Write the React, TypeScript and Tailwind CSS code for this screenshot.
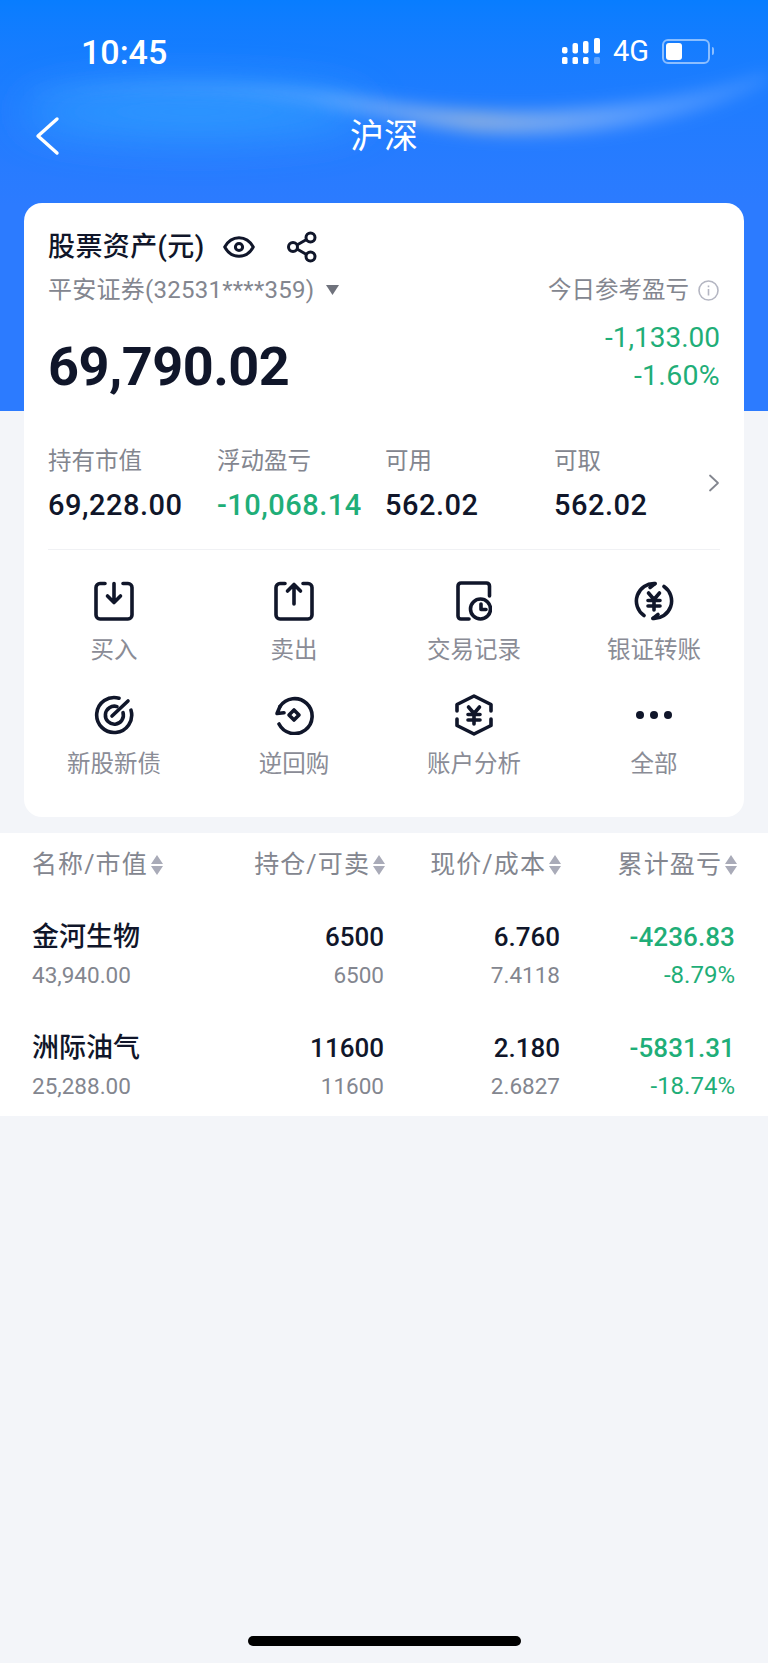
import React from "react";

const CJK = "font-['Roboto','Noto_Sans_CJK_SC',sans-serif]";
const INK = "#10162a";

function Stroke({ w = 40, h = 40, sw = 3.6, children }: { w?: number; h?: number; sw?: number; children: React.ReactNode }) {
  return (
    <svg width={w} height={h} viewBox={`0 0 ${w} ${h}`} fill="none" stroke={INK} strokeWidth={sw} strokeLinecap="round" strokeLinejoin="round">
      {children}
    </svg>
  );
}

const tray = "M11 2.5H6a4 4 0 0 0-4 4V34a4 4 0 0 0 4 4h28a4 4 0 0 0 4-4V6.5a4 4 0 0 0-4-4h-5";
const yen = "M14.5 12l5.5 6.5 5.5-6.5M14 19.5h12M14 25h12M20 19v10";

const icons: Record<string, React.ReactNode> = {
  buy: <Stroke><path d={tray} /><path d="M20 2.5V21M13.5 15l6.5 6.5 6.5-6.5" /></Stroke>,
  sell: <Stroke><path d={tray} /><path d="M20 23V3.5M13.5 10L20 3.5 26.5 10" /></Stroke>,
  record: (
    <Stroke w={36}>
      <path d="M33.5 15V5a3 3 0 0 0-3-3H5a3 3 0 0 0-3 3v30a3 3 0 0 0 3 3h8" />
      <circle cx="24.5" cy="28" r="10" />
      <path d="M25 23v5.5h5" />
    </Stroke>
  ),
  transfer: (
    <Stroke>
      <path d="M21 2.6A17.5 17.5 0 0 0 10 34.5" />
      <path d="M19 37.4A17.5 17.5 0 0 0 30 5.5" />
      <path d="M16 6.5L21 2.6M24 33.5L19 37.4" />
      <path d={yen} />
    </Stroke>
  ),
  ipo: (
    <Stroke>
      <path d="M25 3.2a17.5 17.5 0 1 0 12 12" />
      <path d="M23 11.6a9 9 0 1 0 6 6" />
      <path d="M18 21L34 6" />
    </Stroke>
  ),
  repo: (
    <Stroke>
      <path d="M6 11.5A17.5 17.5 0 1 1 5 29" />
      <path d="M6 11.5L3 18.5l7-.8" />
      <path d="M20 15l5 5-5 5-5-5z" />
    </Stroke>
  ),
  analysis: (
    <Stroke h={42} w={38}>
      <path d="M2 17v-6.5L19 2l17 8.5V17" />
      <path d="M2 25v6.5L19 40l17-8.5V25" />
      <path d="M13.5 13l5.5 6.5 5.5-6.5M13 20.5h12M13 26h12M19 20v10" />
    </Stroke>
  ),
  all: (
    <svg width="40" height="40" viewBox="0 0 40 40" fill={INK}>
      <circle cx="6" cy="20" r="4" />
      <circle cx="20" cy="20" r="4" />
      <circle cx="34" cy="20" r="4" />
    </svg>
  ),
};

const actions = [
  ["buy", "买入"],
  ["sell", "卖出"],
  ["record", "交易记录"],
  ["transfer", "银证转账"],
  ["ipo", "新股新债"],
  ["repo", "逆回购"],
  ["analysis", "账户分析"],
  ["all", "全部"],
];

const metrics = [
  ["持有市值", "69,228.00", "text-[#10162a]"],
  ["浮动盈亏", "-10,068.14", "text-[#1fae78]"],
  ["可用", "562.02", "text-[#10162a]"],
  ["可取", "562.02", "text-[#10162a]"],
];

const rows = [
  ["金河生物", "43,940.00", "6500", "6500", "6.760", "7.4118", "-4236.83", "-8.79%"],
  ["洲际油气", "25,288.00", "11600", "11600", "2.180", "2.6827", "-5831.31", "-18.74%"],
];

function Sort() {
  return (
    <svg width="12" height="20" viewBox="0 0 12 20" fill="#a9abb8" className="ml-[3px] shrink-0">
      <path d="M6 0l6 9H0zM6 20l-6-9h12z" />
    </svg>
  );
}

function Head({ children }: { children: string }) {
  return (
    <div className="flex items-center justify-end">
      <span>{children}</span>
      <Sort />
    </div>
  );
}

function StatusBar() {
  return (
    <div className="flex h-[64px] items-end justify-between pl-[81px] pr-[54px] text-white">
      <span className="text-[34px] leading-[40px] font-medium mb-[-8px]">10:45</span>
      <div className="flex items-center gap-[13px] h-[26px]">
        <svg width="38" height="26" viewBox="0 0 38 26" fill="#fff">
          <rect x="0" y="9" width="5.5" height="6.5" rx="2" />
          <rect x="10.5" y="5" width="5.5" height="10.5" rx="2" />
          <rect x="21" y="3" width="5.5" height="12.5" rx="2" />
          <rect x="32" y="0" width="6" height="15.5" rx="2" />
          <rect x="0" y="19" width="5.5" height="7" rx="1.5" />
          <rect x="10.5" y="19" width="5.5" height="7" rx="1.5" />
          <rect x="21" y="19" width="5.5" height="7" rx="1.5" />
          <rect x="32" y="19" width="6" height="7" rx="1.5" opacity="0.3" />
        </svg>
        <span className="text-[29px] leading-[26px]">4G</span>
        <div className="flex items-center gap-[2px]">
          <div className="w-[48px] h-[25px] rounded-[6px] border-2 border-white/50 p-[2px] flex">
            <div className="w-[16px] rounded-[3px] bg-white" />
          </div>
          <div className="w-[2px] h-[8px] rounded-r-full bg-white/50" />
        </div>
      </div>
    </div>
  );
}

function Wave() {
  return (
    <svg className="absolute inset-0 pointer-events-none" width="768" height="411" viewBox="0 0 768 411" fill="none">
      <defs>
        <filter id="b1" x="-10%" y="-100%" width="120%" height="300%"><feGaussianBlur stdDeviation="8" /></filter>
        <filter id="b2" x="-30%" y="-150%" width="160%" height="400%"><feGaussianBlur stdDeviation="22" /></filter>
        <linearGradient id="band" x1="0" y1="0" x2="768" y2="0" gradientUnits="userSpaceOnUse">
          <stop offset="0" stopColor="#ffffff" stopOpacity="0" />
          <stop offset="0.15" stopColor="#ffffff" stopOpacity="0.1" />
          <stop offset="0.4" stopColor="#ffffff" stopOpacity="0.2" />
          <stop offset="0.62" stopColor="#e8dcc8" stopOpacity="0.5" />
          <stop offset="0.85" stopColor="#ffffff" stopOpacity="0.22" />
          <stop offset="1" stopColor="#ffffff" stopOpacity="0.12" />
        </linearGradient>
      </defs>
      <ellipse cx="195" cy="112" rx="175" ry="26" fill="#36a6ff" opacity="0.7" filter="url(#b2)" />
      <path
        d="M30 90C150 78 280 84 380 100C440 110 500 114 560 110C640 104 710 92 768 72V82C700 116 620 134 520 134C440 134 370 112 300 100C210 88 110 90 30 96Z"
        fill="url(#band)"
        filter="url(#b1)"
      />
    </svg>
  );
}

export default function App() {
  return (
    <div className={`${CJK} relative flex min-h-[1663px] w-[768px] flex-col bg-[#f3f5f9] text-[#10162a]`}>
      <header className="relative h-[411px] bg-gradient-to-b from-[#087dff] to-[#2c7bff] to-50% overflow-hidden">
        <Wave />
        <div className="relative">
          <StatusBar />
          <div className="relative flex h-[72px] mt-[36px] items-center justify-center">
            <svg className="absolute left-[34px] top-[16px]" width="26" height="40" viewBox="0 0 26 40" fill="none" stroke="#fff" strokeWidth="3.4" strokeLinecap="round" strokeLinejoin="round">
              <path d="M23 3L4 20l19 17" />
            </svg>
            <span className="text-[34px] leading-[44px] text-white">沪深</span>
          </div>
        </div>
      </header>

      <main className="relative mx-[24px] mt-[-208px] h-[614px] rounded-[18px] bg-white px-[24px] pt-[24px]">
        <div className="flex h-[40px] items-center">
          <span className="text-[27px] leading-[40px] font-medium tracking-[0.4px] w-[175px]">股票资产(元)</span>
          <svg width="32" height="22" viewBox="0 0 32 22" fill="none" stroke={INK} strokeWidth="3">
            <path d="M1.7 11C5 5 10 1.7 16 1.7S27 5 30.3 11C27 17 22 20.3 16 20.3S5 17 1.7 11Z" strokeLinejoin="round" />
            <circle cx="16" cy="11" r="3.6" />
          </svg>
          <svg className="ml-[32px]" width="30" height="32" viewBox="0 0 30 32" fill="none" stroke={INK} strokeWidth="3">
            <circle cx="23.5" cy="6.5" r="4.5" />
            <circle cx="23.5" cy="25.5" r="4.5" />
            <circle cx="6" cy="16" r="4.5" />
            <path d="M10 14L19.5 8.5M10 18L19.5 23.5" />
          </svg>
        </div>

        <div className="mt-[5px] flex h-[36px] items-center justify-between text-[24px] text-[#83868f] leading-[36px]">
          <div className="flex items-center">
            <span className="tracking-[0.25px]">平安证券(32531****359)</span>
            <svg className="ml-[12px]" width="13" height="10" viewBox="0 0 13 10" fill="#6f727c">
              <path d="M0 0h13L6.5 10z" />
            </svg>
          </div>
          <div className="flex items-center">
            <span className="text-[23.5px]">今日参考盈亏</span>
            <svg className="ml-[9px] mr-[1px]" width="21" height="21" viewBox="0 0 21 21" fill="none" stroke="#b4b6c2" strokeWidth="1.6">
              <circle cx="10.5" cy="10.5" r="9.5" />
              <path d="M10.5 9v6.5M10.5 5.6v1.6" />
            </svg>
          </div>
        </div>

        <div className="mt-[11px] flex h-[76px] items-start justify-between">
          <div className="pt-[20px] text-[54px] leading-[56px] font-bold tracking-[-0.5px]">69,790.02</div>
          <div className="text-right leading-[38px] text-[#1fae78]">
            <div className="text-[28px]">-1,133.00</div>
            <div className="text-[28.5px] tracking-[0.3px]">-1.60%</div>
          </div>
        </div>

        <div className="mt-[48px] flex items-center justify-between">
          <div className="grid grid-cols-[169px_168px_169px_150px]">
            {metrics.map(([label, value, color]) => (
              <div key={label}>
                <div className="text-[23.5px] leading-[36px] text-[#83868f]">{label}</div>
                <div className={`mt-[6px] text-[29px] leading-[40px] font-medium tracking-[0.5px] ${color}`}>{value}</div>
              </div>
            ))}
          </div>
          <svg className="mb-[2px]" width="12" height="18" viewBox="0 0 12 18" fill="none" stroke="#83868f" strokeWidth="1.8" strokeLinecap="round" strokeLinejoin="round">
            <path d="M2 1.5L10 9l-8 7.5" />
          </svg>
        </div>

        <div className="mt-[24px] h-px bg-[#f0f1f4]" />

        <div className="mx-[-24px] mt-[31px] grid grid-cols-4 gap-y-[27px]">
          {actions.map(([key, label]) => (
            <div key={key} className="flex flex-col items-center">
              <div className="flex h-[40px] items-center justify-center">{icons[key]}</div>
              <div className="mt-[11px] text-[23.5px] leading-[36px] text-[#8a8c96]">{label}</div>
            </div>
          ))}
        </div>
      </main>

      <section className="mt-[16px] bg-white pl-[32px] pb-[12px]">
        <div className="grid h-[64px] w-[705px] grid-cols-[188px_165px_176px_176px] items-center text-[25px] tracking-[1.1px] text-[#83868f]">
          <div className="flex items-center">
            <span>名称/市值</span>
            <Sort />
          </div>
          <Head>持仓/可卖</Head>
          <Head>现价/成本</Head>
          <Head>累计盈亏</Head>
        </div>
        <div className="flex flex-col gap-[35px] pt-[20px]">
          {rows.map((r) => (
            <div key={r[0]} className="grid w-[703px] grid-cols-[188px_164px_176px_175px] text-right">
              <div className="text-left">
                <div className="text-[27px] leading-[40px] font-medium">{r[0]}</div>
                <div className="text-[22.5px] leading-[36px] text-[#83868f]">{r[1]}</div>
              </div>
              <div>
                <div className="text-[26px] leading-[40px] font-medium">{r[2]}</div>
                <div className="text-[22.5px] leading-[36px] text-[#83868f]">{r[3]}</div>
              </div>
              <div>
                <div className="text-[26px] leading-[40px] font-medium">{r[4]}</div>
                <div className="text-[22.5px] leading-[36px] text-[#83868f]">{r[5]}</div>
              </div>
              <div className="text-[#1fae78]">
                <div className="text-[26px] leading-[40px] font-medium tracking-[0.1px]">{r[6]}</div>
                <div className="text-[24px] leading-[36px]">{r[7]}</div>
              </div>
            </div>
          ))}
        </div>
      </section>

      <div className="mt-auto mb-[17px] flex justify-center">
        <div className="h-[10px] w-[273px] rounded-full bg-black" />
      </div>
    </div>
  );
}
